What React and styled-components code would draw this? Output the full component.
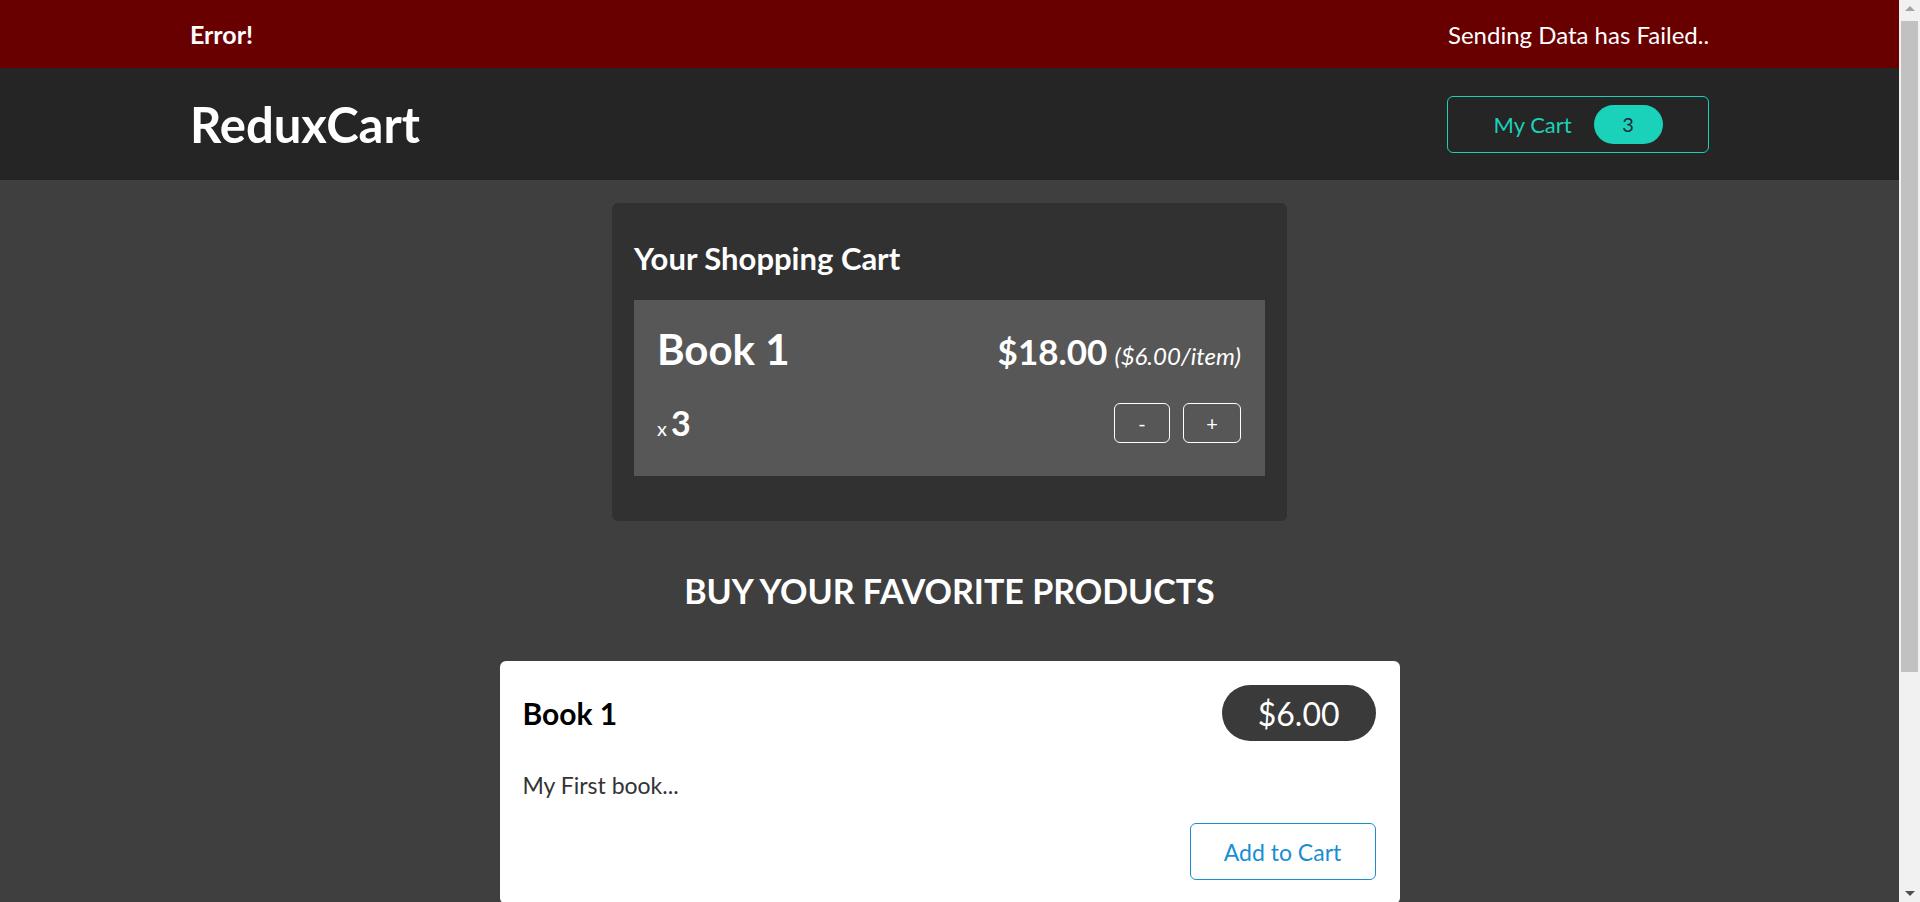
import React from 'react'
import styled, { createGlobalStyle } from 'styled-components'

const GlobalStyle = createGlobalStyle`
  * {
    box-sizing: border-box;
  }
  body {
    margin: 0 21px 0 0;
    background-color: #3f3f3f;
    font-family: 'Lato', 'Liberation Sans', sans-serif;
  }
`

const ScrollTrack = styled.div`
  position: fixed;
  top: 0;
  right: 0;
  width: 21px;
  height: 100vh;
  display: flex;
  flex-direction: column;
  align-items: center;
  background-color: #f1f1f1;
`

const Arrow = styled.div`
  height: ${(props) => (props.up ? 21 : 17)}px;
  display: flex;
  align-items: center;
  padding-bottom: ${(props) => (props.up ? 4 : 0)}px;

  &::before {
    content: '';
    border-left: 5px solid transparent;
    border-right: 5px solid transparent;
    border-${(props) => (props.up ? 'bottom' : 'top')}: 5px solid
      ${(props) => (props.up ? '#a3a3a3' : '#505050')};
  }
`

const Thumb = styled.div`
  width: 17px;
  height: 651px;
  background-color: #c1c1c1;
`

const Spacer = styled.div`
  flex: 1;
`

const Notification = styled.section`
  height: 68px;
  padding: 0 10%;
  display: flex;
  justify-content: space-between;
  align-items: center;
  background-color: #690000;
  color: #fff;
`

const NoteTitle = styled.h2`
  margin: 0;
  font-size: 25px;
  font-weight: 700;
`

const NoteText = styled.p`
  margin: 0;
  font-size: 24px;
`

const Header = styled.header`
  height: 112px;
  padding: 0 10%;
  display: flex;
  justify-content: space-between;
  align-items: center;
  background-color: #252525;
`

const Logo = styled.h1`
  margin: 0;
  color: #fff;
  font-size: 49px;
  font-weight: 700;
`

const CartButton = styled.button`
  width: 262px;
  height: 57px;
  display: flex;
  justify-content: center;
  align-items: center;
  gap: 22px;
  background: transparent;
  border: 1px solid #1ad1b9;
  border-radius: 6px;
  color: #1ad1b9;
  font-family: inherit;
  font-size: 22px;
  cursor: pointer;
`

const Badge = styled.span`
  width: 69px;
  height: 39px;
  display: flex;
  justify-content: center;
  align-items: center;
  background-color: #1ad1b9;
  border-radius: 20px;
  color: #1c2b3a;
  font-size: 20px;
`

const Main = styled.main`
  display: flex;
  flex-direction: column;
  align-items: center;
  padding: 23px 0 16px;
`

const CartCard = styled.section`
  width: 675px;
  padding: 22px 22px 45px;
  background-color: #313131;
  border-radius: 6px;
  color: #fff;
`

const CartTitle = styled.h2`
  margin: 14px 0 23px;
  font-size: 31px;
  font-weight: 700;
`

const CartItem = styled.div`
  padding: 24px 24px 33px 23px;
  background-color: #575757;
`

const Row = styled.div`
  display: flex;
  justify-content: space-between;
  align-items: ${(props) => props.align || 'center'};
  margin-top: ${(props) => props.gap || 0}px;
`

const ItemName = styled.h3`
  margin: 0;
  font-size: 42px;
  font-weight: 700;
`

const Total = styled.div`
  font-size: 35px;
  font-weight: 700;
`

const PerItem = styled.span`
  margin-left: 7px;
  font-size: 24px;
  font-weight: 400;
  font-style: italic;
`

const Quantity = styled.div`
  font-size: 20px;
`

const QtyNumber = styled.span`
  margin-left: 4px;
  font-size: 34px;
  font-weight: 700;
`

const Actions = styled.div`
  display: flex;
  gap: 13px;
`

const QtyButton = styled.button`
  width: ${(props) => props.w}px;
  height: 40px;
  background: transparent;
  border: 1px solid #fff;
  border-radius: 6px;
  color: #fff;
  font-family: inherit;
  font-size: 20px;
  cursor: pointer;
`

const ProductsTitle = styled.h2`
  margin: 49px 0 50px;
  color: #fff;
  font-size: 34px;
  font-weight: 700;
  text-transform: uppercase;
`

const ProductList = styled.ul`
  list-style: none;
  margin: 0;
  padding: 0;
  display: flex;
  flex-direction: column;
  gap: 26px;
`

const ProductCard = styled.li`
  width: 900px;
  padding: 24px 24px 24px 23px;
  background-color: #fff;
  border-radius: 6px;
`

const ProductName = styled.h3`
  margin: 0;
  color: #000;
  font-size: 30px;
  font-weight: 700;
`

const Price = styled.div`
  height: 56px;
  padding: 0 36px;
  display: flex;
  align-items: center;
  background-color: #3a3a3a;
  border-radius: 28px;
  color: #fff;
  font-size: 32px;
`

const Description = styled.p`
  margin: 30px 0 24px;
  color: #333;
  font-size: 23px;
`

const AddButton = styled.button`
  width: 186px;
  height: 57px;
  background: transparent;
  border: 1px solid #1a8ed1;
  border-radius: 6px;
  color: #1a8ed1;
  font-family: inherit;
  font-size: 23px;
  cursor: pointer;
`

const Footer = styled.div`
  display: flex;
  justify-content: flex-end;
`

const PRODUCTS = [
  { id: 'p1', title: 'Book 1', price: 6, description: 'My First book...' },
  { id: 'p2', title: 'Book 2', price: 5, description: 'My Second book...' },
]

const App = () => {
  return (
    <>
      <GlobalStyle />
      <Notification>
        <NoteTitle>Error!</NoteTitle>
        <NoteText>Sending Data has Failed..</NoteText>
      </Notification>
      <Header>
        <Logo>ReduxCart</Logo>
        <CartButton>
          <span>My Cart</span>
          <Badge>3</Badge>
        </CartButton>
      </Header>
      <Main>
        <CartCard>
          <CartTitle>Your Shopping Cart</CartTitle>
          <CartItem>
            <Row align='baseline'>
              <ItemName>Book 1</ItemName>
              <Total>
                $18.00<PerItem>($6.00/item)</PerItem>
              </Total>
            </Row>
            <Row gap={28}>
              <Quantity>
                x<QtyNumber>3</QtyNumber>
              </Quantity>
              <Actions>
                <QtyButton w={56}>-</QtyButton>
                <QtyButton w={58}>+</QtyButton>
              </Actions>
            </Row>
          </CartItem>
        </CartCard>
        <ProductsTitle>Buy your favorite products</ProductsTitle>
        <ProductList>
          {PRODUCTS.map((product) => (
            <ProductCard key={product.id}>
              <Row>
                <ProductName>{product.title}</ProductName>
                <Price>${product.price.toFixed(2)}</Price>
              </Row>
              <Description>{product.description}</Description>
              <Footer>
                <AddButton>Add to Cart</AddButton>
              </Footer>
            </ProductCard>
          ))}
        </ProductList>
      </Main>
      <ScrollTrack aria-hidden='true'>
        <Arrow up />
        <Thumb />
        <Spacer />
        <Arrow />
      </ScrollTrack>
    </>
  )
}

export default App
